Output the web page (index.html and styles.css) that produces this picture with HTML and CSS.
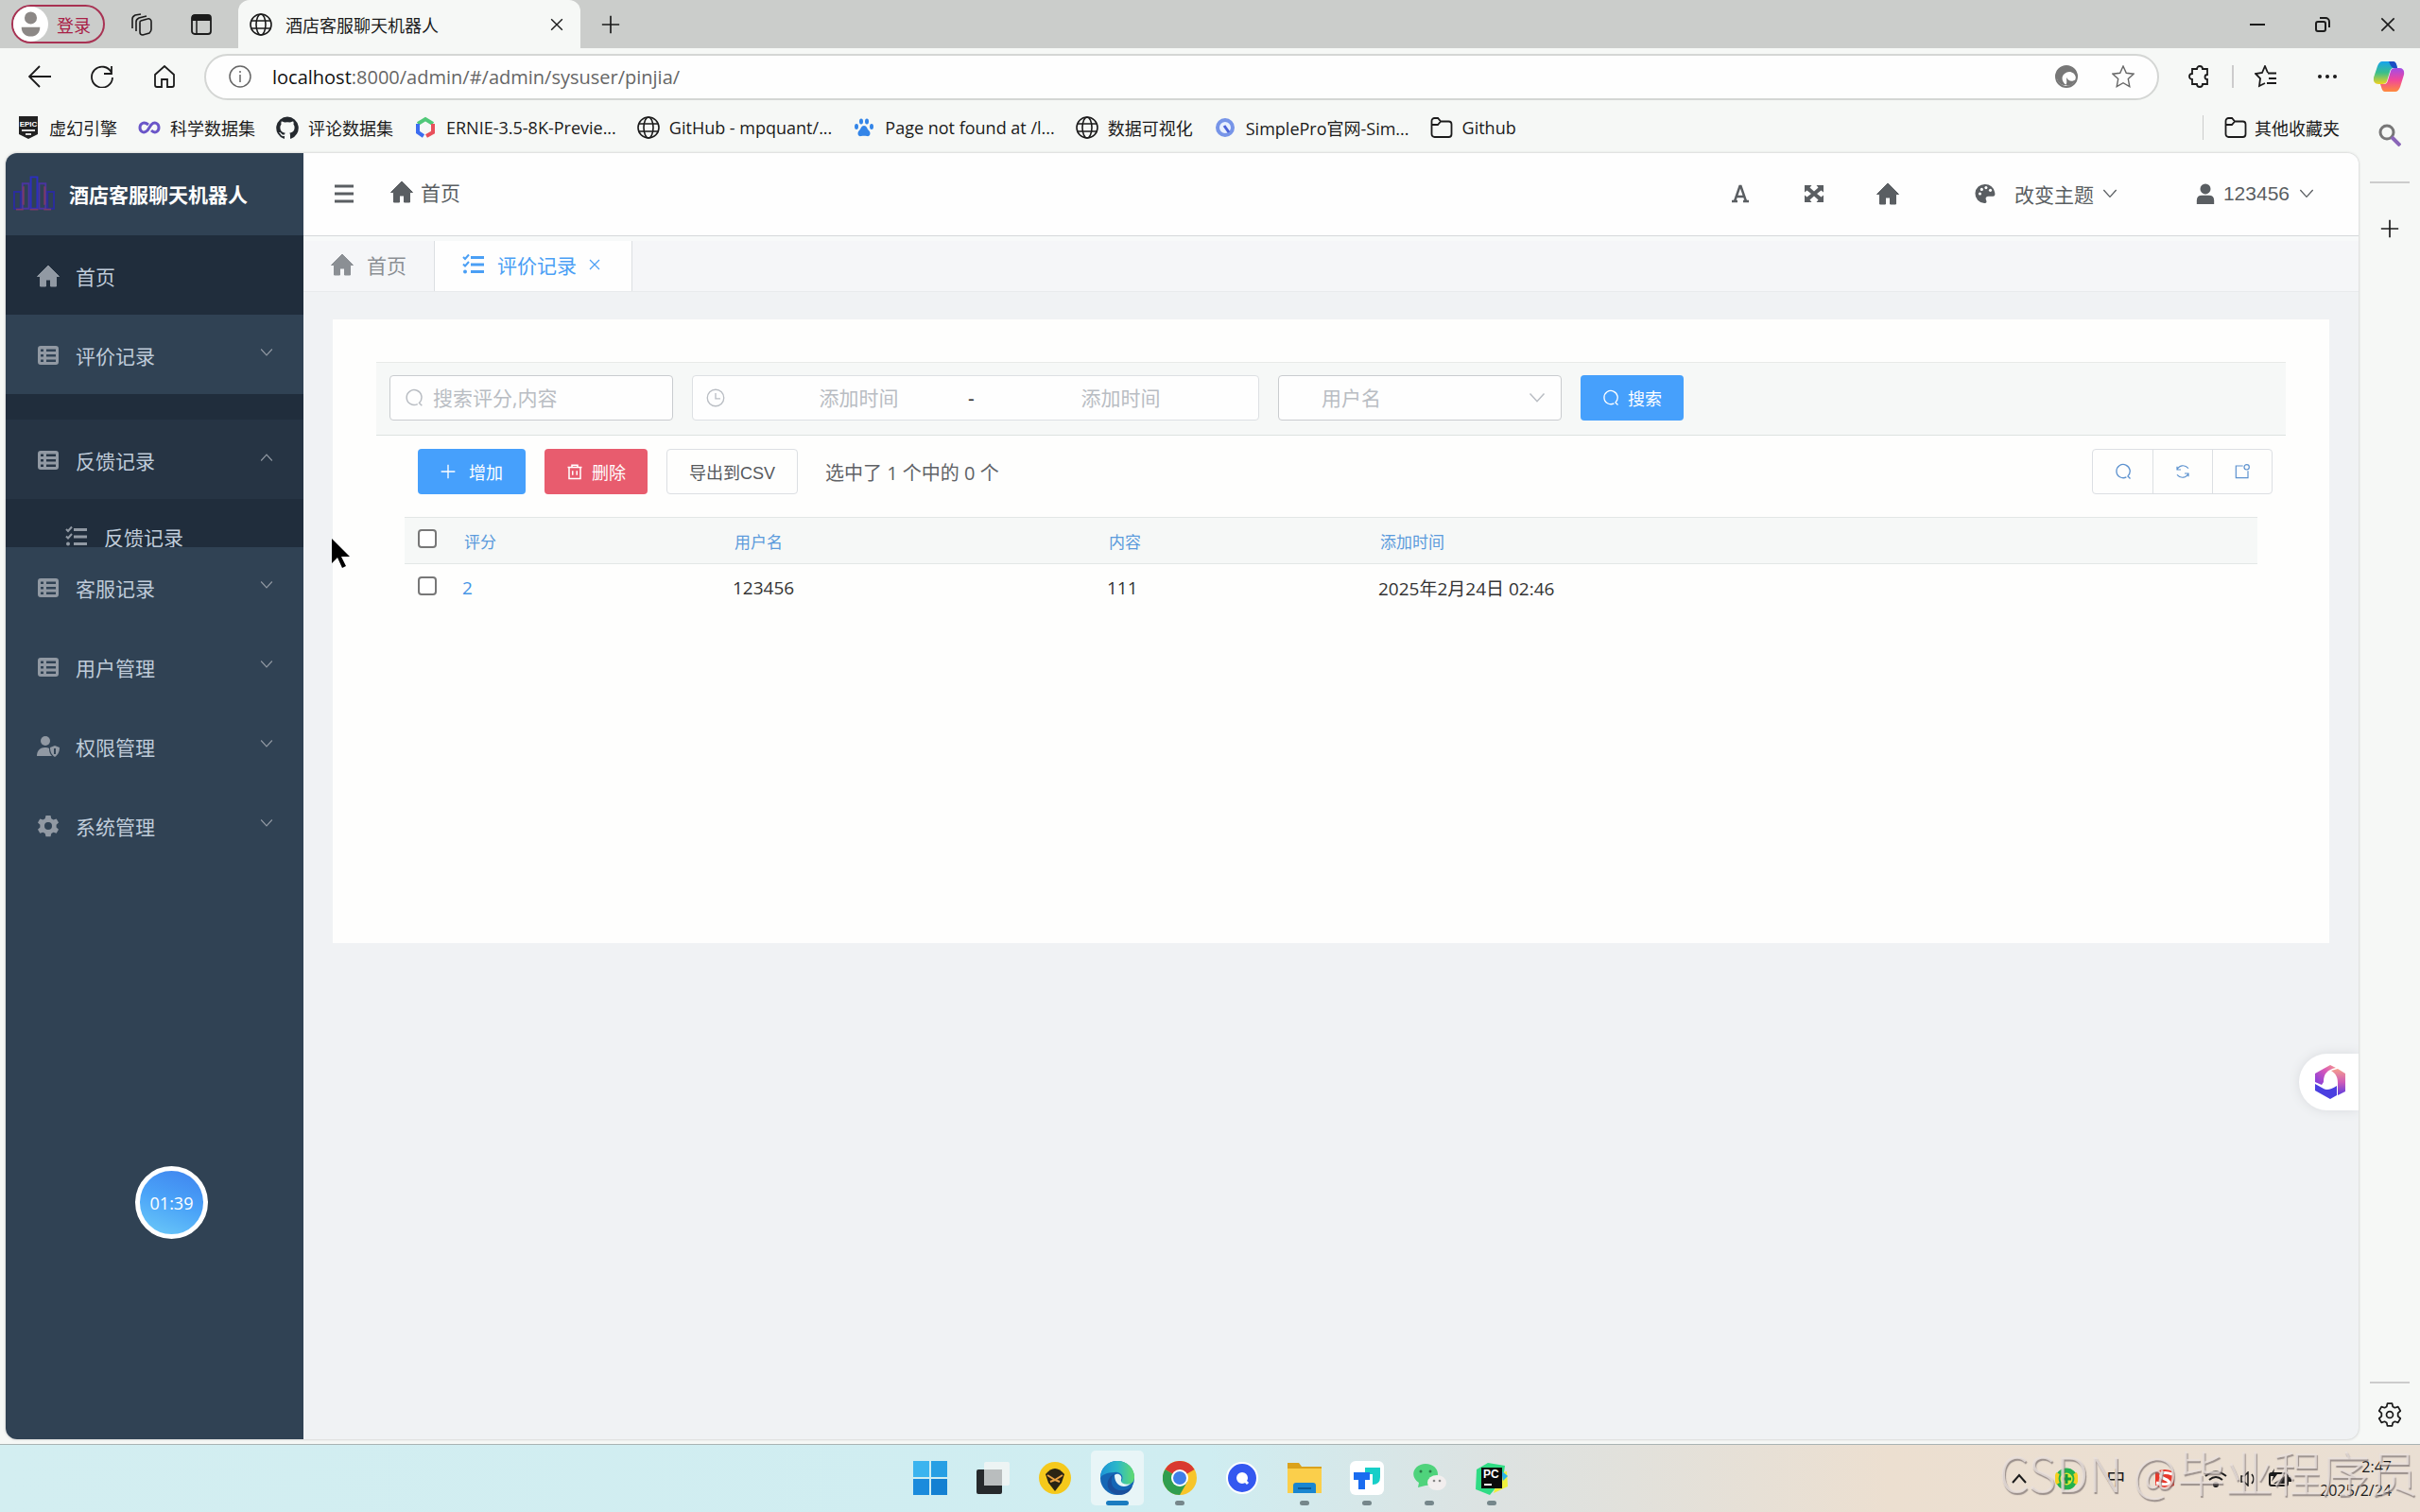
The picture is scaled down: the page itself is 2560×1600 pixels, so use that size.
FILE: index.html
```html
<!DOCTYPE html>
<html lang="zh-CN">
<head>
    <meta charset="UTF-8">
    <meta name="viewport" content="width=device-width, initial-scale=1.0">
    <title>酒店客服聊天机器人</title>
    <link rel="stylesheet" href="styles.css">
</head>
<body>
    <!-- shared icons -->
    <svg class="sprite" aria-hidden="true">
        <symbol id="i-globe" viewBox="0 0 24 24"><g fill="none" stroke="currentColor" stroke-width="1.6"><circle cx="12" cy="12" r="11"/><ellipse cx="12" cy="12" rx="5" ry="11"/><path d="M2 8h20M2 16h20"/></g></symbol>
        <symbol id="i-folder" viewBox="0 0 24 24"><path d="M1.5 5a3 3 0 0 1 3-3h3.600l3 3.500h8.400a3 3 0 0 1 3 3V19a3 3 0 0 1-3 3h-15a3 3 0 0 1-3-3zM1.500 9H8l3-3.500" fill="none" stroke="currentColor" stroke-width="1.800"/></symbol>
        <symbol id="i-home" viewBox="0 0 24 24"><path d="M12 1 0.500 12.500h3V23h6v-7h5v7h6V12.500h3z" fill="currentColor" stroke="currentColor" stroke-linejoin="round"/></symbol>
        <symbol id="i-list" viewBox="0 0 24 24"><path fill="currentColor" fill-rule="evenodd" d="M4 2h16a3 3 0 0 1 3 3v14a3 3 0 0 1-3 3H4a3 3 0 0 1-3-3V5a3 3 0 0 1 3-3zM4 5.500v2.500h3V5.500zm6 0v2.500h10V5.500zM4 11v2.500h3V11zm6 0v2.500h10V11zM4 16.500V19h3v-2.500zm6 0V19h10v-2.500z"/></symbol>
        <symbol id="i-tasks" viewBox="0 0 24 24"><g fill="none" stroke="currentColor"><path d="M9 4.500h14M9 12h14M9 19.500h14" stroke-width="3"/><path d="m1 4 2 2 4-4.500M1 11.500l2 2L7 9" stroke-width="2"/></g><circle cx="3" cy="19.500" r="2" fill="currentColor"/></symbol>
        <symbol id="i-down" viewBox="0 0 24 24"><path d="m2 6 10 11L22 6" fill="none" stroke="currentColor" stroke-width="2"/></symbol>
        <symbol id="i-search" viewBox="0 0 24 24"><path d="M18.500 18.500a9.500 9.500 0 1 0-2 1.400M18 18l4 4" fill="none" stroke="currentColor" stroke-width="1.800"/></symbol>
        <symbol id="i-close" viewBox="0 0 24 24"><path d="m2 2 20 20M22 2 2 22" fill="none" stroke="currentColor" stroke-width="2.400"/></symbol>
        <symbol id="i-plus" viewBox="0 0 24 24"><path d="M12 1v22M1 12h22" fill="none" stroke="currentColor" stroke-width="2"/></symbol>
        <symbol id="i-gear" viewBox="0 0 24 24"><path fill="currentColor" fill-rule="evenodd" d="M9.500 1h5l.8 3.300 2.200 1.200 3.200-1 2.300 4-2.400 2.300v2.600l2.400 2.300-2.300 4-3.200-1-2.200 1.200-.8 3.300h-5l-.8-3.300-2.200-1.200-3.200 1-2.300-4 2.400-2.300v-2.600L1 8.500l2.300-4 3.200 1 2.200-1.200zM12 8a4 4 0 1 0 0 8 4 4 0 0 0 0-8z"/></symbol>
        <symbol id="i-gear-line" viewBox="0 0 24 24"><g fill="none" stroke="currentColor" stroke-width="1.600" stroke-linejoin="round"><path d="M9.700 1h4.600l.7 3.200 2 1.100 3.100-1 2.300 4-2.400 2.200v3l2.400 2.200-2.300 4-3.100-1-2 1.100-.7 3.200H9.700L9 19.800l-2-1.100-3.100 1-2.300-4L4 13.500v-3L1.600 8.300l2.300-4 3.100 1 2-1.100z"/><circle cx="12" cy="12" r="3.200"/></g></symbol>
    </svg>

    <div class="browser">
        <div class="tab-strip">
            <button class="login">
                <svg viewBox="0 0 34 34"><circle cx="17" cy="17" r="17" fill="#fff"/><circle cx="17" cy="11" r="6" fill="#8c8886"/><path d="M8 20h18c0 6-4 9-9 9s-9-3-9-9z" fill="#8c8886"/></svg>
                登录
            </button>
            <button class="icon-btn" aria-label="工作区"><svg viewBox="0 0 24 24" fill="none" stroke="currentColor" stroke-width="1.600"><path d="m12 8 7-2a3 3 0 0 1 4 3v8c0 2-1 3-2 4l-7 2c-2 0-3-1-3-3V10c0-1 0-2 1-2zM7 19V9c0-2 1-3 3-4l8-2M3 16V6c0-2 1-3 3-4l6-1"/></svg></button>
            <button class="icon-btn" aria-label="标签页"><svg viewBox="0 0 24 24"><rect x="2" y="2" width="20" height="20" rx="3" fill="none" stroke="currentColor" stroke-width="1.800"/><path d="M2 2h20v6H2z" fill="currentColor"/><path d="M7 8v14" stroke="currentColor" stroke-width="1.500"/></svg></button>
            <div class="browser-tab">
                <svg class="ic24"><use href="#i-globe"/></svg>
                <span>酒店客服聊天机器人</span>
                <button aria-label="关闭标签"><svg class="ic14"><use href="#i-close"/></svg></button>
            </div>
            <button class="icon-btn new-tab" aria-label="新标签"><svg><use href="#i-plus"/></svg></button>
            <div class="window-controls">
                <button aria-label="最小化"><svg class="ic16" viewBox="0 0 16 16"><path d="M0 8h16" stroke="currentColor" stroke-width="2"/></svg></button>
                <button aria-label="还原"><svg class="ic16" viewBox="0 0 16 16" fill="none" stroke="currentColor" stroke-width="2"><rect x="1" y="5" width="10" height="10" rx="2"/><path d="M5 1h6a4 4 0 0 1 4 4v6"/></svg></button>
                <button aria-label="关闭"><svg class="ic16"><use href="#i-close"/></svg></button>
            </div>
        </div>

        <div class="toolbar">
            <button aria-label="后退"><svg viewBox="0 0 24 24"><path d="M12 1 1 12l11 11M1 12h23" fill="none" stroke="currentColor" stroke-width="1.800"/></svg></button>
            <button aria-label="刷新"><svg viewBox="0 0 24 24"><path d="M22 8A11 11 0 1 0 23 13M22 1v8h-8" fill="none" stroke="currentColor" stroke-width="1.800"/></svg></button>
            <button aria-label="主页"><svg viewBox="0 0 24 24"><path d="M2 10 12 1l10 9v11q0 2-2 2h-5v-8H9v8H4q-2 0-2-2z" fill="none" stroke="currentColor" stroke-width="1.800"/></svg></button>
            <div class="address">
                <svg class="ic24" viewBox="0 0 24 24" fill="none" stroke="currentColor" stroke-width="1.500"><circle cx="12" cy="12" r="11"/><path d="M12 10v8M12 6v2"/></svg>
                <span class="url"><b>localhost</b>:8000/admin/#/admin/sysuser/pinjia/</span>
                <svg class="ic24 swirl" viewBox="0 0 24 24"><circle cx="12" cy="12" r="11" fill="none" stroke="#777" stroke-width="2"/><path d="M2 8C4 1 15-1 20 5c2 2 3 5 2 8-1-6-8-8-12-4-4 3-3 9 2 12C5 22 0 15 2 8zM12 13c2 4 6 5 10 2-2 5-7 8-11 6 2-2 1-5 1-8z" fill="#777"/></svg>
                <svg class="ic24" viewBox="0 0 24 24"><path d="m12 1 3.300 7.300 7.700.9-5.700 5.400 1.500 8L12 18.700 5.200 22.600l1.500-8L1 9.200l7.700-.9z" fill="none" stroke="#666" stroke-width="1.400"/></svg>
            </div>
            <div class="toolbar-right">
                <button aria-label="扩展"><svg viewBox="0 0 24 24"><path d="M9 4a3 3 0 0 1 6 0h5v6a2 2 0 1 0 0 5v5h-5a3 3 0 0 1-6 0H4v-5a3 3 0 0 1 0-6V4z" fill="none" stroke="currentColor" stroke-width="1.800"/></svg></button>
                <i class="bar"></i>
                <button aria-label="收藏夹"><svg viewBox="0 0 24 24" fill="none" stroke="currentColor" stroke-width="1.800"><path d="m14 8-3-7-3 7-7 1 5 5-1 8 6-3M14 8.500h9M15 14h8M13 19h10"/></svg></button>
                <button class="more" aria-label="更多"><svg viewBox="0 0 24 24" fill="currentColor"><circle cx="4" cy="12" r="2"/><circle cx="12" cy="12" r="2"/><circle cx="20" cy="12" r="2"/></svg></button>
                <button class="copilot" aria-label="Copilot"><svg viewBox="0 0 34 34"><defs><linearGradient id="cp1" x1="0" y1="0" x2="0" y2="1"><stop offset="0" stop-color="#17a3ee"/><stop offset=".5" stop-color="#3bbf8a"/><stop offset="1" stop-color="#f1d21f"/></linearGradient><linearGradient id="cp2" x1="0" y1="1" x2="0" y2="0"><stop offset="0" stop-color="#ff8b3c"/><stop offset=".5" stop-color="#f0479b"/><stop offset="1" stop-color="#a14ce8"/></linearGradient></defs><path d="M10 1h11q3 0 4 4l1 3h-4q-3 0-4 4l-3 10q-1 3-5 3H6q-6 0-5-7L5 6q2-5 5-5z" fill="url(#cp1)"/><path d="M17 1h5q3 0 4 7h-4q-3-1-5-7z" fill="#1b4fc4"/><path d="M24 33H13q-3 0-4-5l-1-3h4q3 0 4-4l3-10q1-3 5-3h4q6 0 5 7l-4 13q-2 5-5 5z" fill="url(#cp2)"/></svg></button>
            </div>
        </div>

        <div class="below">
            <div class="main-col">
                <nav class="bookmarks">
                    <a href="#"><svg class="ic24" viewBox="0 0 24 24"><path d="M2 0h20v19l-10 5-10-5z" fill="#222"/><text x="12" y="11" font-size="8" font-weight="bold" text-anchor="middle" fill="#fff" font-family="Liberation Sans, sans-serif">EPIC</text><path d="M5 15h14M9 19h6" stroke="#ddd" stroke-width="2"/></svg>虚幻引擎</a>
                    <a href="#"><svg class="ic24" viewBox="0 0 24 24" fill="none" stroke="#6a55c8" stroke-width="3"><path d="M11 9C6 5 2 8 2 12s4 7 8 3l4-6c4-4 8-1 8 3s-4 7-8 3"/></svg>科学数据集</a>
                    <a href="#"><svg class="ic24" viewBox="0 0 24 24"><path fill="#24292e" d="M12 .5a12 12 0 0 0-3.800 23.300c.6.100.8-.2.8-.6v-2.200c-3.300.7-4-1.400-4-1.400-.6-1.400-1.400-1.800-1.400-1.800-1-.7.100-.7.100-.7 1.200.1 1.900 1.200 1.900 1.200 1 1.800 2.800 1.300 3.500 1 .1-.8.4-1.300.7-1.600-2.600-.3-5.400-1.300-5.400-5.900 0-1.300.5-2.400 1.200-3.200-.1-.3-.5-1.500.1-3.200 0 0 1-.3 3.300 1.200a11 11 0 0 1 6 0c2.300-1.500 3.300-1.200 3.300-1.200.6 1.700.2 2.900.1 3.200.8.800 1.200 1.900 1.200 3.200 0 4.600-2.800 5.600-5.400 5.900.4.400.8 1.100.8 2.200v3.300c0 .4.200.7.800.6A12 12 0 0 0 12 .5z"/></svg>评论数据集</a>
                    <a href="#"><svg class="ic24" viewBox="0 0 24 24" fill="none" stroke-width="4"><path d="M4 8l8-5 8 5" stroke="#50c878"/><path d="M4 8v9l6 4" stroke="#3c6df0"/><path d="M20 8v9l-7 4" stroke="#e8505b"/></svg>ERNIE-3.5-8K-Previe...</a>
                    <a href="#"><svg class="ic24"><use href="#i-globe"/></svg>GitHub - mpquant/...</a>
                    <a href="#"><svg class="ic24" viewBox="0 0 24 24" fill="#3385e8"><ellipse cx="4" cy="11" rx="2" ry="3"/><ellipse cx="9" cy="5.500" rx="2" ry="3"/><ellipse cx="15" cy="5.500" rx="2" ry="3"/><ellipse cx="20" cy="11" rx="2" ry="3"/><path d="M12 10c3 0 3 3 5 5 3 3 1 7-2 6-2-.4-4-.4-6 0-3 1-5-3-2-6 2-2 2-5 5-5z"/></svg>Page not found at /l...</a>
                    <a href="#"><svg class="ic24"><use href="#i-globe"/></svg>数据可视化</a>
                    <a href="#"><svg class="ic24" viewBox="0 0 24 24"><circle cx="12" cy="12" r="8" fill="#e8f0ff" stroke="#7795e8" stroke-width="4"/><path d="m11 10 5 7" stroke="#4a62d8" stroke-width="3"/></svg>SimplePro官网-Sim...</a>
                    <a href="#"><svg class="ic24"><use href="#i-folder"/></svg>Github</a>
                    <a href="#" class="other"><svg class="ic24"><use href="#i-folder"/></svg>其他收藏夹</a>
                </nav>

                <div class="app">
                    <aside class="sidebar">
                        <div class="logo">
                            <svg viewBox="0 0 46 40" fill="none" stroke-width="2"><path d="M1 36V18h7v18zM37 36V18h7v18z" stroke="#2a2d9c"/><path d="M10 36V9h7v27zM28 36V9h7v27z" stroke="#4a35a0"/><path d="M19 36V2h7v34z" stroke="#2c2fc0"/><path d="M3 37h8M18 37h9M33 37h8M11 12v20M34 12v20" stroke="#7a3a6a"/></svg>
                            酒店客服聊天机器人
                        </div>
                        <a href="#" class="item dark"><svg class="ic24"><use href="#i-home"/></svg>首页</a>
                        <a href="#" class="item"><svg class="ic24"><use href="#i-list"/></svg>评价记录<svg class="arrow"><use href="#i-down"/></svg></a>
                        <div class="submenu closing"></div>
                        <a href="#" class="item hover"><svg class="ic24"><use href="#i-list"/></svg>反馈记录<svg class="arrow up"><use href="#i-down"/></svg></a>
                        <div class="submenu opening">
                            <a href="#" class="item sub"><svg class="ic24"><use href="#i-tasks"/></svg>反馈记录</a>
                        </div>
                        <a href="#" class="item"><svg class="ic24"><use href="#i-list"/></svg>客服记录<svg class="arrow"><use href="#i-down"/></svg></a>
                        <a href="#" class="item"><svg class="ic24"><use href="#i-list"/></svg>用户管理<svg class="arrow"><use href="#i-down"/></svg></a>
                        <a href="#" class="item"><svg class="ic24" viewBox="0 0 24 24" fill="currentColor"><circle cx="9" cy="6" r="5"/><path d="M0 22c0-6 4-9 8-9 3 0 4 0 5 1 0 4 1 6 3 8zM14 13l5-2 5 2c0 5-2 8-5 10-3-2-5-5-5-10z"/><path d="M19 14v6" stroke="#304254" stroke-width="2"/></svg>权限管理<svg class="arrow"><use href="#i-down"/></svg></a>
                        <a href="#" class="item"><svg class="ic24"><use href="#i-gear"/></svg>系统管理<svg class="arrow"><use href="#i-down"/></svg></a>
                        <div class="timer">01:39</div>
                    </aside>

                    <div class="content">
                        <header class="navbar">
                            <button aria-label="折叠菜单"><svg class="ic20" viewBox="0 0 20 20"><path d="M0 2h20M0 10h20M0 18h20" stroke="currentColor" stroke-width="3"/></svg></button>
                            <a href="#" class="crumb"><svg class="ic24"><use href="#i-home"/></svg>首页</a>
                            <div class="nav-right">
                                <button class="nav-icon" aria-label="字体"><svg class="ic20" viewBox="0 0 20 20" fill="none" stroke="currentColor"><path d="M4 18 9.500 2h1L16 18M6 13h8" stroke-width="2.500"/><path d="M1 18h6M13 18h6" stroke-width="2.500"/></svg></button>
                                <button class="nav-icon" aria-label="全屏"><svg class="ic20" viewBox="0 0 20 20" fill="currentColor"><path d="M0 1h7.500L5.500 3.500 10 7.500l4.500-4L12.500 1H20v7.500l-2.500-2L13 10l4.500 3.500 2.500-2V19h-7.500l2-2.500-4.500-4-4.500 4 2 2.500H0v-7.500l2.500 2L7 10 2.500 6.500 0 8.500z"/></svg></button>
                                <button class="nav-icon" aria-label="主页"><svg class="ic24"><use href="#i-home"/></svg></button>
                                <button class="drop theme"><svg class="ic22" viewBox="0 0 24 24"><path fill="currentColor" d="M12 1a11 11 0 0 0-1 22c3 0 3-2 2-4s0-4 3-4h5c2 0 3-2 2-5a11 11 0 0 0-11-9z"/><g fill="#fff"><circle cx="6" cy="12" r="1.700"/><circle cx="8" cy="7" r="1.700"/><circle cx="13" cy="5" r="1.700"/><circle cx="18" cy="8" r="1.700"/></g></svg>改变主题<svg class="ic16"><use href="#i-down"/></svg></button>
                                <button class="drop user"><svg class="ic22" viewBox="0 0 24 24" fill="currentColor"><circle cx="12" cy="6.500" r="6"/><path d="M2 24v-4c0-4 2-6 6-6h8c4 0 6 2 6 6v4z"/></svg>123456<svg class="ic16"><use href="#i-down"/></svg></button>
                            </div>
                        </header>

                        <nav class="tags">
                            <a href="#" class="tag"><svg class="ic24"><use href="#i-home"/></svg>首页</a>
                            <a href="#" class="tag active"><svg class="ic24"><use href="#i-tasks"/></svg>评价记录<svg class="ic12"><use href="#i-close"/></svg></a>
                        </nav>

                        <main class="card">
                            <form class="filters">
                                <label class="field keyword"><svg class="ic20"><use href="#i-search"/></svg><input type="text" aria-label="搜索" placeholder="搜索评分,内容"></label>
                                <div class="field daterange">
                                    <svg class="ic20" viewBox="0 0 24 24" fill="none" stroke="currentColor" stroke-width="1.600"><circle cx="12" cy="12" r="10.500"/><path d="M12 6v7h6"/></svg>
                                    <input type="text" aria-label="开始时间" placeholder="添加时间">
                                    <span>-</span>
                                    <input type="text" aria-label="结束时间" placeholder="添加时间">
                                </div>
                                <div class="field select">
                                    <select aria-label="用户名"><option>用户名</option><option>123456</option></select>
                                    <svg class="ic18"><use href="#i-down"/></svg>
                                </div>
                                <button type="button" class="btn primary"><svg class="ic18"><use href="#i-search"/></svg>搜索</button>
                            </form>

                            <div class="actions">
                                <button class="btn primary add"><svg class="ic16"><use href="#i-plus"/></svg>增加</button>
                                <button class="btn danger"><svg class="ic18" viewBox="0 0 24 24" fill="none" stroke="currentColor" stroke-width="2"><path d="M2 6h20M8 6V3h8v3M4 6v16h16V6M9 11v6M15 11v6"/></svg>删除</button>
                                <button class="btn plain">导出到CSV</button>
                                <span class="count">选中了 1 个中的 0 个</span>
                                <div class="tools">
                                    <button aria-label="搜索"><svg class="ic18"><use href="#i-search"/></svg></button>
                                    <button aria-label="刷新"><svg class="ic16" viewBox="0 0 24 24" fill="none" stroke="currentColor" stroke-width="1.800"><path d="M3 9C6 2 15 0 21 7M21 15c-3 7-12 9-18 2M3 4v5h6M21 20v-5h-6"/></svg></button>
                                    <button aria-label="弹出"><svg class="ic16" viewBox="0 0 24 24" fill="none" stroke="currentColor" stroke-width="1.800"><path d="M13 3H2v19h19V11"/><circle cx="19" cy="5" r="4"/></svg></button>
                                </div>
                            </div>

                            <table>
                                <thead>
                                    <tr>
                                        <th class="c-check"><input type="checkbox" aria-label="全选"></th>
                                        <th class="c-score">评分</th>
                                        <th class="c-user">用户名</th>
                                        <th class="c-text">内容</th>
                                        <th>添加时间</th>
                                    </tr>
                                </thead>
                                <tbody>
                                    <tr>
                                        <td><input type="checkbox" aria-label="选择此行"></td>
                                        <td><a href="#">2</a></td>
                                        <td>123456</td>
                                        <td>111</td>
                                        <td>2025年2月24日 02:46</td>
                                    </tr>
                                </tbody>
                            </table>
                        </main>

                        <button class="assistant" aria-label="助手"><svg viewBox="0 0 34 38"><defs><linearGradient id="as1" x1="0" y1="1" x2="1" y2="0"><stop offset="0" stop-color="#7a3be0"/><stop offset=".6" stop-color="#d858b8"/><stop offset="1" stop-color="#f59a8a"/></linearGradient><linearGradient id="as2" x1="0" y1="0" x2="0" y2="1"><stop offset="0" stop-color="#f5a08c"/><stop offset=".5" stop-color="#d05cb8"/><stop offset="1" stop-color="#5a3be0"/></linearGradient></defs><path d="M1 19V10L17 1l6 3c-9 2-13 6-13 15l-2 3z" fill="url(#as1)"/><path d="M18 7l7-2 8 5v19l-8 4V20c0-6-2-10-7-13z" fill="url(#as2)"/><path d="M1 21l9 5c3 2 8 1 14-3v10l-7 4-16-9z" fill="#4a3fe0"/></svg></button>
                    </div>
                </div>
            </div>

            <div class="edge-bar">
                <button aria-label="搜索"><svg class="ic24" viewBox="0 0 24 24" fill="none"><circle cx="9" cy="9" r="7" stroke="#777" stroke-width="3"/><path d="m14 14 9 9" stroke="#8a66b8" stroke-width="4"/></svg></button>
                <hr>
                <button aria-label="添加"><svg class="ic20"><use href="#i-plus"/></svg></button>
                <hr class="push">
                <button aria-label="设置"><svg class="ic26"><use href="#i-gear-line"/></svg></button>
            </div>
        </div>
    </div>

    <footer class="taskbar">
        <div class="apps">
            <button aria-label="开始"><svg viewBox="0 0 36 36"><path d="M0 0h17v17H0z" fill="#3bb4ef"/><path d="M19 0h17v17H19z" fill="#279fe4"/><path d="M0 19h17v17H0z" fill="#1b8bdc"/><path d="M19 19h17v17H19z" fill="#1480d2"/></svg></button>
            <button aria-label="任务视图"><svg viewBox="0 0 36 36"><rect x="1" y="9" width="27" height="26" rx="2" fill="#26292c"/><rect x="9" y="1" width="27" height="25" rx="2" fill="#f2f4f4" opacity=".85"/><path d="M9 9h19v17H9z" fill="#b9bdbe"/></svg></button>
            <button aria-label="工具"><svg viewBox="0 0 36 36"><circle cx="18" cy="18" r="17" fill="#f5c91c"/><path d="M8 14q10-12 20 0l-3 9-7 9-7-9z" fill="#2a2414"/><path d="m10 15 8 5 8-5M13 22l5-2 5 2" stroke="#e8a040" stroke-width="2" fill="none"/></svg></button>
            <button class="current" aria-label="Edge"><svg viewBox="0 0 36 36"><defs><linearGradient id="ed" x1="0" y1="0" x2="1" y2="0"><stop offset="0" stop-color="#1c94d8"/><stop offset=".5" stop-color="#2bb8c8"/><stop offset="1" stop-color="#62dc6c"/></linearGradient></defs><circle cx="18" cy="18" r="18" fill="#1566b5"/><path d="M0 18C0 7 8 0 18 0s18 7 18 17c0 6-5 9-10 8-4-1-5-3-3-5 2-5-3-9-8-8C7 12 1 15 0 18z" fill="url(#ed)"/><path d="M15 14c-6 5-4 17 7 17 6 0 10-2 12-5-2 9-14 13-22 7C4 27 8 16 15 14z" fill="#1a4f9c"/><path d="M15 15c3-3 9 0 7 5-1 3 4 6 10 4-6 6-17 3-17-9z" fill="#e6f5f7"/></svg></button>
            <button class="running" aria-label="Chrome"><svg viewBox="0 0 36 36"><circle cx="18" cy="18" r="18" fill="#f7c52a"/><path d="M18 18 2.400 9A18 18 0 0 1 33.600 9z" fill="#d93a30"/><path d="M2.400 9A18 18 0 0 0 18 36l8-14-8-4z" fill="#2f9e4f"/><circle cx="18" cy="18" r="9" fill="#fff"/><circle cx="18" cy="18" r="7" fill="#3f7ee8"/></svg></button>
            <button aria-label="夸克"><svg viewBox="0 0 36 36"><circle cx="18" cy="18" r="17" fill="#fff"/><circle cx="18" cy="18" r="10.500" fill="none" stroke="#3458f0" stroke-width="9"/><path d="m20 20 4 4" stroke="#fff" stroke-width="3"/></svg></button>
            <button class="running" aria-label="文件资源管理器"><svg viewBox="0 0 36 36"><path d="M0 2h12l3 4h21v28H0z" fill="#dba21c"/><path d="M0 8h36v26H0z" fill="#fbcf4b"/><path d="M6 34v-8q0-3 3-3h18q3 0 3 3v8z" fill="#1a86d0"/><path d="M11 29h14" stroke="#0c5a98" stroke-width="2"/></svg></button>
            <button class="running" aria-label="ToDesk"><svg viewBox="0 0 36 36"><rect width="36" height="36" rx="6" fill="#fff"/><path d="M16 7h16v10q0 8-8 8V14h-8z" fill="#18cfc8"/><path d="M4 12h17v8h-5v10H9V20H4z" fill="#1a6cf0"/></svg></button>
            <button class="running" aria-label="微信"><svg viewBox="0 0 36 36"><path d="M14 3c8 0 13 5 13 11s-5 12-13 12l-8 2 1-5C-4 16 2 3 14 3z" fill="#4fd37c"/><ellipse cx="26" cy="23" rx="10" ry="8" fill="#f2eeee"/><g fill="#2a7a48"><circle cx="9" cy="11" r="1.500"/><circle cx="19" cy="11" r="1.500"/></g><g fill="#888"><circle cx="23" cy="21" r="1.300"/><circle cx="29" cy="21" r="1.300"/></g></svg></button>
            <button class="running" aria-label="PyCharm"><svg viewBox="0 0 36 36"><path d="M2 9 14 2l18 3-2 14-14 17L1 30z" fill="#2fdc84"/><path d="m20 34 15-7-1-16-8 2z" fill="#eef03c"/><path d="m28 10 7 6-5 5z" fill="#28b4e8"/><path d="M7 7h22v22H7z" fill="#0b0b0b"/><text x="9" y="18" font-size="12" font-weight="bold" fill="#fff" font-family="Liberation Sans, sans-serif">PC</text><path d="M10 25h8" stroke="#fff" stroke-width="2"/></svg></button>
        </div>
        <div class="tray">
            <svg class="ic16" viewBox="0 0 16 16"><path d="m1 12 7-8 7 8" fill="none" stroke="currentColor" stroke-width="2"/></svg>
            <svg class="ic24" viewBox="0 0 24 24"><circle cx="12" cy="12" r="9" fill="#d8e838" stroke="#22b24c" stroke-width="5"/><path d="M12 7v10M7 12h10" stroke="#119a3a" stroke-width="3"/><path d="M21 6a12 12 0 0 1 0 11M3 6a12 12 0 0 0 0 11" stroke="#f5d020" stroke-width="4" fill="none"/></svg>
            <span class="ime">中</span>
            <svg class="ic24" viewBox="0 0 24 24"><path d="M2 5q10-6 20 0v14q-10 6-20 0z" fill="#e8382c"/><path d="M20 7C8 3 4 9 12 12s6 8-9 4" stroke="#fff" stroke-width="3" fill="none"/></svg>
            <div class="status">
                <svg class="ic24" viewBox="0 0 24 24" fill="none" stroke="currentColor" stroke-width="2"><path d="M1 9q11-9 22 0M5 13q7-6 14 0"/><circle cx="12" cy="18" r="2" fill="currentColor"/></svg>
                <svg class="ic16" viewBox="0 0 16 16" fill="none" stroke="currentColor" stroke-width="1.500"><path d="M1 5h3l4-4v14l-4-4H1zM12 3q4 5 0 10"/></svg>
                <svg class="ic24" viewBox="0 0 24 24"><rect x="1" y="6" width="19" height="13" rx="2" fill="none" stroke="currentColor" stroke-width="2"/><path d="M5 17 17 9v8zM21 10h3v5h-3z" fill="currentColor"/><path d="M6 1 1 9h4l-2 6 6-8H5z" fill="currentColor"/></svg>
            </div>
            <div class="clock">2:47<br>2025/2/24</div>
        </div>
        <div class="watermark">CSDN @毕业程序员</div>
    </footer>

    <svg class="cursor" viewBox="0 0 20 32"><path d="M0 0v26l6-6 5 11 4-2-5-10h9z" fill="#000"/></svg>
</body>
</html>
```

FILE: styles.css
```css
* { box-sizing: border-box; }
body { margin: 0; min-height: 100vh; display: flex; flex-direction: column; position: relative; font-family: "Open Sans", "Noto Sans CJK SC", sans-serif; font-size: 18px; color: #1b1b1b; background: #f6f8f6; }
button { font: inherit; color: inherit; background: none; border: 0; padding: 0; display: flex; align-items: center; justify-content: center; }
a { color: inherit; text-decoration: none; }
input, select { font: inherit; }
svg { flex: none; display: block; }
.sprite { position: absolute; width: 0; height: 0; }
.ic12 { width: 12px; height: 12px; }
.ic14 { width: 14px; height: 14px; }
.ic16 { width: 16px; height: 16px; }
.ic18 { width: 18px; height: 18px; }
.ic20 { width: 20px; height: 20px; }
.ic22 { width: 22px; height: 22px; }
.ic24 { width: 24px; height: 24px; }
.ic26 { width: 26px; height: 26px; }

/* browser window */
.browser { flex: 1; display: flex; flex-direction: column; border-bottom: 1px solid #a9b3b3; }
.tab-strip { height: 51px; display: flex; align-items: center; background: #cbcdcb; padding-left: 12px; }
.login { width: 99px; height: 41px; border: 2px solid #a83253; border-radius: 21px; color: #a82046; gap: 9px; justify-content: flex-start; }
.login svg { width: 37px; height: 37px; }
.icon-btn { width: 64px; height: 51px; }
.icon-btn svg { width: 24px; height: 24px; }
.login + .icon-btn { margin-left: 6px; }
.browser-tab { width: 362px; height: 51px; display: flex; align-items: center; gap: 14px; padding: 0 18px 0 12px; margin-left: 7px; background: #f6f8f6; border-radius: 12px 12px 0 0; }
.browser-tab button { margin-left: auto; }
.new-tab svg { width: 20px; height: 20px; }
.window-controls { margin-left: auto; display: flex; }
.window-controls button { width: 69px; height: 51px; }

.toolbar { height: 60px; display: flex; align-items: center; padding-left: 9px; }
.toolbar button { width: 66px; height: 48px; }
.toolbar svg { width: 24px; height: 24px; }
.address { flex: 1; height: 49px; display: flex; align-items: center; margin-left: 9px; padding: 0 24px; background: #fefefe; border: 2px solid #d4d6d4; border-radius: 25px; color: #666; }
.url { flex: 1; margin-left: 22px; font-size: 20px; }
.url b { font-weight: normal; color: #111; }
.swirl { margin-right: 36px; }
.toolbar-right { width: 276px; display: flex; align-items: center; padding-left: 10px; }
.bar { width: 2px; height: 24px; background: #ccc; margin: 0 2px; }
.toolbar .copilot svg { width: 34px; height: 34px; }

.below { flex: 1; display: flex; }
.main-col { flex: 1; display: flex; flex-direction: column; padding: 0 0 5px 6px; }
.bookmarks { height: 51px; display: flex; align-items: center; gap: 22px; padding: 0 20px 4px 12px; }
.bookmarks a { display: flex; align-items: center; gap: 10px; white-space: nowrap; }
.bookmarks .other { margin-left: auto; padding-left: 22px; border-left: 1px solid #ccc; height: 26px; gap: 8px; }
.edge-bar { width: 65px; display: flex; flex-direction: column; align-items: center; padding: 20px 0 18px; }
.edge-bar hr { width: 42px; border: 0; border-top: 2px solid #ccc; margin: 37px 0 38px; }
.edge-bar .push { margin: auto 0 20px; }

/* admin page */
.app { flex: 1; display: flex; border-radius: 12px; overflow: hidden; background: #f0f2f4; box-shadow: 0 0 3px #bbb; }
.sidebar { width: 315px; position: relative; background: #304254; color: #bfcbd9; }
.logo { height: 87px; display: flex; align-items: center; gap: 14px; padding: 0 0 2px 8px; color: #fff; font-size: 21px; font-weight: bold; }
.logo svg { width: 45px; height: 40px; }
.item { height: 84px; display: flex; align-items: center; gap: 17px; padding: 2px 32px 0 33px; font-size: 21px; }
.item svg { color: #9199a3; }
.item .arrow { width: 14px; height: 14px; margin: 0 0 6px auto; }
.item .up { transform: rotate(180deg); }
.item.dark { background: #202d3c; }
.item.hover { background: #263444; }
.submenu { background: #202d3c; overflow: hidden; }
.closing { height: 27px; }
.opening { height: 51px; }
.item.sub { padding-left: 63px; height: 78px; }
.timer { position: absolute; left: 137px; bottom: 212px; width: 77px; height: 77px; display: flex; align-items: center; justify-content: center; border: 5px solid #fff; border-radius: 50%; background: linear-gradient(200deg, #3f83ee, #4aa3f8 50%, #6dcbf8); color: #fff; }

.content { flex: 1; min-width: 0; position: relative; }
.navbar { height: 88px; display: flex; align-items: center; padding: 0 47px 2px 33px; background: #fefefe; border-bottom: 1px solid #d5d8da; color: #5a5e62; font-size: 21px; }
.crumb { display: flex; align-items: center; gap: 8px; margin-left: 39px; padding-bottom: 4px; }
.nav-right { margin-left: auto; display: flex; align-items: center; }
.nav-icon { width: 78px; height: 60px; }
.drop { gap: 9px; }
.theme { margin-left: 53px; }
.theme .ic22 { margin-right: 11px; }
.user { margin-left: 82px; gap: 8px; font-family: "Liberation Sans", sans-serif; }
.user .ic16 { margin-left: 2px; }
.tags { height: 59px; display: flex; background: #f5f6f8; border-top: 5px solid #f7f9f9; border-bottom: 1px solid #e8eaec; color: #8b8f94; font-size: 21px; }
.tag { display: flex; align-items: center; gap: 14px; padding: 0 29px 4px; border-right: 1px solid #dcdfe2; }
.tag.active { gap: 13px; padding: 0 33px 4px 29px; background: #fefefe; color: #4a9ff5; }
.card { min-height: 660px; margin: 29px 31px 0; padding: 45px 46px 0; background: #fefefd; }

.filters { height: 78px; display: flex; align-items: center; gap: 20px; padding: 0 14px 3px; background: #f6f8f7; border-top: 1px solid #e8eae8; border-bottom: 1px solid #dde2e0; }
.field { height: 48px; display: flex; align-items: center; position: relative; background: #fefefe; border: 1px solid #c9cccf; border-radius: 4px; color: #b9bdc3; font-size: 21px; }
.field input { width: 100%; min-width: 0; border: 0; outline: 0; padding: 0; background: none; }
.field input::placeholder { color: #b9bdc3; opacity: 1; }
.keyword { width: 300px; padding-left: 15px; gap: 10px; }
.daterange { width: 600px; padding: 0 30px 0 14px; border-color: #dde0e3; }
.daterange input { text-align: center; }
.daterange svg { margin-right: 26px; }
.daterange span { flex: none; width: 46px; color: #333; }
.select { width: 300px; }
.select select { width: 100%; height: 46px; padding: 0 45px; border: 0; background: none; color: #b9bdc3; appearance: none; }
.select svg { position: absolute; right: 16px; pointer-events: none; }
.btn { height: 48px; padding: 0 23px; gap: 9px; border-radius: 4px; }
.primary { background: #46a0fc; color: #fff; }
.danger { background: #e85c6e; color: #fff; }
.add { padding: 0 24px; gap: 14px; }
.plain { border: 1px solid #dcdfe3; color: #55585c; font-family: "Liberation Sans", "Noto Sans CJK SC", sans-serif; }
.actions { display: flex; align-items: center; gap: 20px; padding: 14px 14px 0 44px; }
.count { margin-left: 9px; font-size: 20px; color: #606266; }
.tools { margin-left: auto; display: flex; border: 1px solid #dcdfe3; border-radius: 4px; color: #5d92cf; }
.tools button { width: 63px; height: 46px; }
.tools button + button { border-left: 1px solid #dcdfe3; }

table { width: calc(100% - 60px); margin: 24px 30px 0; border-collapse: collapse; table-layout: fixed; }
th { height: 49px; padding: 1px 0 0 13px; text-align: left; font-weight: normal; font-size: 17px; color: #5b9bdc; background: #f6f8f7; border-top: 1px solid #e3e7e6; border-bottom: 1px solid #e3e7e6; }
td { height: 51px; padding: 0 0 0 11px; font-size: 19px; color: #333; }
th:first-child, td:first-child { padding: 0 0 5px 14px; }
td a { color: #4595e6; }
.c-check { width: 50px; }
.c-score { width: 286px; }
.c-user { width: 396px; }
.c-text { width: 287px; }
input[type=checkbox] { appearance: none; display: block; width: 20px; height: 20px; margin: 0; border: 2px solid #777; border-radius: 4px; background: #fff; }
.assistant { position: absolute; right: 0; bottom: 348px; width: 63px; height: 60px; padding-left: 3px; background: #fff; border-radius: 30px 0 0 30px; box-shadow: 0 0 12px #d8dade; }
.assistant svg { width: 34px; height: 38px; }

/* desktop taskbar */
.taskbar { height: 71px; position: relative; display: flex; justify-content: center; background: linear-gradient(90deg, #d3eef1, #cfedf1 50%, #dde2e1 62%, #ecdfd0 78%, #eadfd3); }
.apps { display: flex; align-items: center; gap: 10px; padding: 0 0 2px 2px; }
.apps button { width: 56px; height: 58px; position: relative; border-radius: 5px; }
.apps svg { width: 36px; height: 36px; }
.apps .current { background: #e8f5f7; }
.running::after, .current::after { content: ""; position: absolute; bottom: 0; width: 10px; height: 5px; border-radius: 3px; background: #76878b; }
.current::after { width: 24px; background: #1a7cc0; }
.tray { position: absolute; right: 30px; top: 0; height: 71px; display: flex; align-items: center; gap: 30px; }
.ime { font-size: 20px; line-height: 24px; }
.status { display: flex; align-items: center; gap: 14px; }
.clock { font-size: 16px; line-height: 25px; text-align: right; }
.watermark { position: absolute; right: 2px; top: 0; font-family: "Noto Sans CJK SC", sans-serif; font-size: 51px; line-height: 56px; font-weight: 300; color: rgba(232, 224, 220, 0.8); text-shadow: 1px 2px 1px rgba(120, 110, 110, 0.7); white-space: nowrap; }
.cursor { position: absolute; left: 351px; top: 570px; width: 20px; height: 32px; }
```
